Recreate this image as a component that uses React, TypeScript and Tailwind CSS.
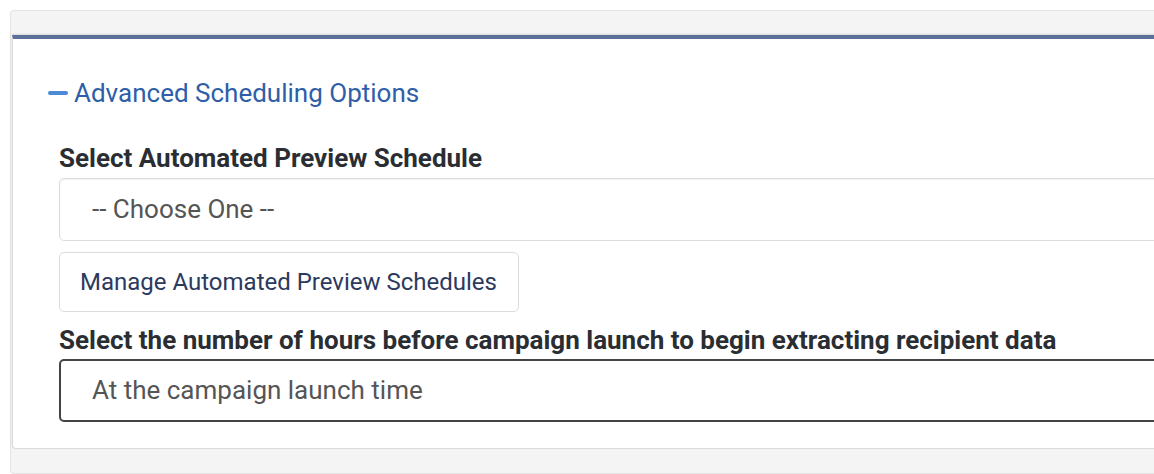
export default function App() {
  return (
    <div className="w-[1154px] h-[474px] overflow-hidden bg-white" style={{ fontFamily: 'Roboto, "Liberation Sans", sans-serif' }}>
      <div className="ml-[10px] mt-[10px] w-[1200px] rounded-l-[4px] border border-[#e3e3e3] bg-[#f4f4f4] pl-px pt-[24px] pb-[24px]">
        <div className="rounded-bl-[4px] border-t-4 border-l border-b border-t-[#5b6f99] border-l-[#dcdcdc] border-b-[#dcdcdc] bg-white pl-[35px] pt-[39px] pb-[26px] shadow-[0_-1px_2px_rgba(0,0,0,0.12)]">
          <div className="flex items-center gap-[6px] h-[30px]">
            <span className="block w-[20px] h-[4px] rounded-full bg-[#4d8ad6]" />
            <span className="text-[26px] leading-[30px] text-[#2e5ea8]">Advanced Scheduling Options</span>
          </div>
          <div className="pl-[11px] pt-[36px]">
            <div className="text-[26px] leading-[28px] font-bold text-[#2a2e33]">Select Automated Preview Schedule</div>
            <div className="mt-[6px] h-[63px] flex items-center rounded-[5px] border border-[#dcdcdc] shadow-[inset_0_1px_2px_rgba(0,0,0,0.06)] pl-[32px] text-[26px] text-[#555]">
              -- Choose One --
            </div>
            <div className="mt-[11px] w-[460px] h-[60px] flex items-center rounded-[5px] border border-[#dcdcdc] pl-[20px] text-[24px] text-[#2c3a5e]">
              Manage Automated Preview Schedules
            </div>
            <div className="mt-[14px] text-[26px] leading-[28px] font-bold text-[#2a2e33] whitespace-nowrap">
              Select the number of hours before campaign launch to begin extracting recipient data
            </div>
            <div className="mt-[5px] h-[63px] flex items-center rounded-[5px] border-2 border-[#444] pl-[31px] text-[26px] text-[#555]">
              At the campaign launch time
            </div>
          </div>
        </div>
      </div>
    </div>
  );
}
